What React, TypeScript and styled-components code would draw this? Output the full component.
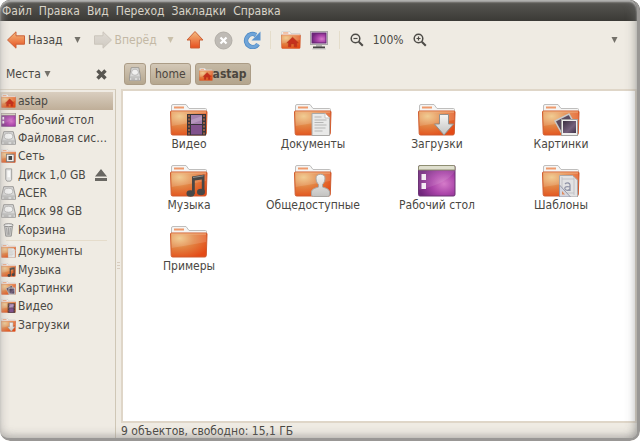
import React from "react";
import styled, { createGlobalStyle } from "styled-components";

const GlobalStyle = createGlobalStyle`
  * { box-sizing: border-box; }
  html, body { margin: 0; background: #fff; }
  body, button { font: 12px/14px "DejaVu Sans Condensed", "DejaVu Sans", sans-serif; color: #4a4843; }
  button { border: 0; padding: 0; background: none; display: flex; align-items: center; }
  ul { list-style: none; margin: 0; padding: 0; }
  svg { display: block; flex: none; }
`;

const Window = styled.div`
  position: relative;
  min-height: 100vh;
  display: flex;
  flex-direction: column;
  overflow: hidden;
  background: #efebe3;
  border-radius: 10px;
`;

const EdgeShade = styled.div`
  position: absolute;
  inset: 0;
  pointer-events: none;
  border-radius: 10px;
  border-right: 3px solid #999795;
  border-bottom: 3px solid #999795;
  box-shadow: inset 0 2px 2px #b5b5b3, inset 5px 0 8px -3px #b5b3b199, inset -8px 0 10px -6px #77777788, inset 0 -9px 10px -7px #77777777;
`;

const MenuBar = styled.nav`
  height: 21px;
  padding: 0 2px;
  display: flex;
  gap: 7px;
  align-items: center;
  background: linear-gradient(#5a5955, #3b3a36);
  button { color: #d9d4c8; }
`;

const Toolbar = styled.div`
  height: 38px;
  padding: 0 18px 0 6px;
  display: flex;
  align-items: center;
`;

const ToolButton = styled.button<{ $gap?: number }>`
  margin-right: ${(p) => p.$gap ?? 0}px;
  gap: 2px;
  &:disabled { color: #c3b8a5; }
`;

const Separator = styled.span`
  width: 1px;
  height: 18px;
  background: #e4ddcb;
  margin-right: 10px;
`;

const Zoom = styled.span`
  margin: 0 9px;
`;

const Spacer = styled.span`
  flex: 1;
`;

const LocationRow = styled.div`
  height: 30px;
  display: flex;
  align-items: center;
`;

const PlacesHeader = styled.div`
  width: 124px;
  padding: 0 17px 0 6px;
  display: flex;
  justify-content: space-between;
  button { gap: 3px; }
`;

const Crumbs = styled.div`
  display: flex;
  gap: 4px;
`;

const Crumb = styled.button<{ $current?: boolean }>`
  height: 22px;
  padding: 0 ${(p) => (p.$current ? 3 : 4)}px;
  border: 1px solid #ab9c86;
  border-radius: 3px;
  background: ${(p) => (p.$current ? "linear-gradient(#c4b8a4, #b4a58d)" : "linear-gradient(#d3c8b7, #b5a78f)")};
  color: #4c463e;
  font-weight: ${(p) => (p.$current ? 700 : 400)};
`;

const Body = styled.div`
  flex: 1;
  display: grid;
  grid-template-columns: 116px 5px minmax(0, 1fr);
`;

const Sidebar = styled.aside`
  border-top: 1px solid #d9d0c0;
  border-right: 1px solid #cfc7b6;
  padding: 2px 2px 0 0;
`;

const PlaceList = styled.ul<{ $height: number }>`
  height: ${(p) => p.$height}px;
  display: grid;
  grid-template-columns: minmax(0, 1fr);
  grid-auto-rows: 1fr;
  li { display: flex; }
`;

const Rule = styled.hr`
  height: 1px;
  margin: 1px 6px;
  border: 0;
  background: #e5dccb;
`;

const Place = styled.button<{ $selected?: boolean }>`
  width: 100%;
  padding: 0 6px 0 1px;
  gap: 2px;
  white-space: nowrap;
  background: ${(p) => (p.$selected ? "linear-gradient(#d9cebf, #bfae98)" : "none")};
  svg:last-child:not(:first-child) { margin-left: auto; }
`;

const Grip = styled.div`
  display: flex;
  align-items: center;
  justify-content: center;
`;

const Main = styled.main`
  display: flex;
  flex-direction: column;
  padding-right: 3px;
`;

const Files = styled.div`
  flex: 1;
  padding: 13px 4px;
  display: grid;
  grid-template-columns: repeat(auto-fill, 124px);
  grid-auto-rows: 61px;
  align-content: start;
  background: #fff;
  border: 2px solid #dfd6c8;
`;

const File = styled.button`
  flex-direction: column;
  gap: 1px;
`;

const Status = styled.footer`
  height: 17px;
  margin-bottom: 1px;
  line-height: 16px;
`;

type Kind =
  | "plain" | "video" | "docs" | "down" | "pics" | "music" | "public" | "templates"
  | "home" | "network" | "desktop" | "drive" | "usb" | "trash";

const Emblem = ({ kind }: { kind: Kind }) => {
  switch (kind) {
    case "video":
      return (
        <g>
          <rect x="17" y="10" width="19" height="21.500" fill="#38343a" />
          <rect x="21" y="11" width="11" height="9" fill="#a480ad" />
          <rect x="21" y="21" width="11" height="9.500" fill="#81528d" />
          <path d="M19 11v20M34 11v20" stroke="#b76b45" strokeWidth="1.500" strokeDasharray="2 1.500" />
          <path d="m21 16 11-4v4l-11 4z" fill="#c3a6c9" opacity=".6" />
        </g>
      );
    case "docs":
      return (
        <g>
          <path d="M18 9.500h13l4.500 4.500v17.500H18z" fill="#e9e9e8" stroke="#aaa9a7" />
          <path d="M31 9.500V14h4.500" fill="#fff" stroke="#c5c5c3" />
          <path d="M20.500 13h7M20.500 16h12M20.500 18.500h9M20.500 21h12M20.500 24h11M20.500 27h8" stroke="#b5b5b4" />
        </g>
      );
    case "down":
      return <path d="M21.500 10.500h9v9.500h5L26 31l-9.500-11h5z" fill="url(#silver)" stroke="#92908d" />;
    case "pics":
      return (
        <g>
          <path d="m13 17 14-7 6 11-14 7z" fill="#5b4c60" stroke="#c9c8c6" strokeWidth="1.500" />
          <rect x="19.500" y="15.500" width="16" height="16" fill="#eeeeec" stroke="#a4a3a1" />
          <rect x="21" y="17" width="13" height="12" fill="url(#photo)" />
        </g>
      );
    case "music":
      return (
        <g fill="#484746">
          <path d="M22 11.500 34.500 9.500V27h-2.700V14.500l-7 1V29H22z" />
          <ellipse cx="20.500" cy="28.500" rx="4" ry="3.300" />
          <ellipse cx="31" cy="27" rx="4" ry="3.300" />
          <path d="m23 12.500 10.500-1.700" stroke="#91908d" />
        </g>
      );
    case "public":
      return (
        <path d="M22 13c0-5 9-5 9 0 0 3-1 5-2.500 6.500V22c3 1 7 2 7 5v3q0 1.500-2 1.500h-14q-2 0-2-1.500v-3c0-3 4-4 7-5v-2.500C23 18 22 16 22 13z" fill="url(#silver)" stroke="#a9a7a4" />
      );
    case "templates":
      return (
        <g>
          <path d="M17.500 10.500h13l5 4.500v17h-18z" fill="#e2e2e3" stroke="#aaa9ab" />
          <path d="M20 14h12M20 28h12M20 12v18M32 12v18" stroke="#bbbbc0" strokeWidth=".8" />
          <path d="M23 19c2-2 5-1 5 1v6m0-4c-3-1-6 0-5 2s4 2 5-.5" fill="none" stroke="#9295a8" strokeWidth="1.300" />
          <path d="M17.500 20v12h11z" fill="#d4d6df" stroke="#9698a8" />
          <path d="M20 26v3.500h3z" fill="#e08a5c" />
        </g>
      );
    case "home":
      return <path d="M11 21 22 11l11 10h-3v7h-5v-5h-6v5h-5v-7z" fill="#c5301c" stroke="#b63a1c" />;
    case "network":
      return (
        <g>
          <rect x="14" y="12" width="19" height="17" fill="#f0efed" stroke="#777" strokeWidth="2" />
          <rect x="19" y="16" width="9" height="9" fill="#444" />
        </g>
      );
    default:
      return null;
  }
};

const Folder = ({ kind }: { kind: Kind }) => (
  <g>
    <path d="M1.500 11V2q0-1.500 1.500-1.500h13l3 4h16.500q1 0 1 1V11z" fill="#f5f5f4" stroke="#bfbebd" />
    <path d="M4 3.500h10" stroke="#ee9a6c" strokeWidth="2" />
    <path d="M.5 8q0-1 1-1h34.500q1 0 1 1l-.7 21.500q0 1.500-1.500 1.500H2.700q-1.500 0-1.500-1.500z" fill="url(#orange)" stroke="#cf5c30" />
    <path d="M1.500 8H36v8Q20 19 1.700 22z" fill="#fff" opacity=".14" />
    <path d="M1.500 8h34.500" stroke="#f0b080" />
    <Emblem kind={kind} />
  </g>
);

const Icon = ({ kind, w = 38, h = 32 }: { kind: Kind; w?: number; h?: number }) => (
  <svg width={w} height={h} viewBox="0 0 38 32" preserveAspectRatio="none" aria-hidden="true">
    <defs>
      <radialGradient id="orange" cx=".25" cy=".22" r=".9">
        <stop offset="0" stopColor="#efc482" />
        <stop offset=".45" stopColor="#e28443" />
        <stop offset="1" stopColor="#e44a16" />
      </radialGradient>
      <linearGradient id="silver" x2="0" y2="1">
        <stop offset="0" stopColor="#f5f5f4" />
        <stop offset="1" stopColor="#c3c2c0" />
      </linearGradient>
      <linearGradient id="photo" x2="1" y2="1">
        <stop offset="0" stopColor="#3b3040" />
        <stop offset=".6" stopColor="#75617c" />
        <stop offset="1" stopColor="#40354a" />
      </linearGradient>
      <radialGradient id="violet" cx=".7" cy=".6" r=".7">
        <stop offset="0" stopColor="#d57bc9" />
        <stop offset=".5" stopColor="#a943a8" />
        <stop offset="1" stopColor="#71267c" />
      </radialGradient>
    </defs>
    {kind === "desktop" ? (
      <g>
        <rect x=".5" y=".5" width="36.500" height="30.500" rx="1.500" fill="url(#violet)" stroke="#6c3474" />
        <path d="M.5 5V2Q.5.500 2 .5h33.500Q37 .5 37 2v3z" fill="#dfdfce" stroke="#8e8e72" />
        <path d="M1 6h36Q30 18 1 25z" fill="#fff" opacity=".1" />
        <rect x="3.500" y="9" width="4.500" height="6" fill="#f4edf4" />
        <rect x="3.500" y="18" width="4.500" height="6" fill="#f4edf4" />
      </g>
    ) : kind === "drive" ? (
      <g>
        <path d="M7 1.500h24l5.500 21v7q0 2-2 2H3.500q-2 0-2-2v-7z" fill="#d9d9d8" stroke="#8d8c8a" strokeWidth="2" />
        <ellipse cx="19" cy="12" rx="11" ry="7" fill="#f0f0ef" stroke="#adacab" strokeWidth="2" />
        <path d="M3 23h32" stroke="#a4a3a2" strokeWidth="2" />
        <path d="M7 27.500h12M26 27.500h6" stroke="#8f8e8c" strokeWidth="2" />
      </g>
    ) : kind === "usb" ? (
      <g>
        <path d="M12 2h15v24l-3 4h-9l-3-4z" fill="#e6e6e5" stroke="#92918f" strokeWidth="2" />
        <path d="M16 6h7v15h-7z" fill="#fbfbfa" />
      </g>
    ) : kind === "trash" ? (
      <g>
        <path d="M9 7h20l-3 23H12z" fill="#cfcfce" stroke="#888785" strokeWidth="2" />
        <path d="M14 11l2 16M19 11v16M24 11l-2 16" stroke="#9a9997" strokeWidth="2" />
        <ellipse cx="19" cy="5" rx="12" ry="3.500" fill="#f0f0ef" stroke="#7b7a78" strokeWidth="2" />
      </g>
    ) : (
      <Folder kind={kind} />
    )}
  </svg>
);

const Arrow = ({ dir, off }: { dir: "left" | "right" | "up"; off?: boolean }) => (
  <svg width="20" height="20" viewBox="0 0 20 20" aria-hidden="true">
    <defs>
      <linearGradient id={`arrow-${dir}`} x2="0" y2="1">
        <stop offset="0" stopColor={off ? "#cfcac2" : "#f4bd80"} />
        <stop offset="1" stopColor={off ? "#e0dbd4" : "#e64e1e"} />
      </linearGradient>
    </defs>
    <path
      d={dir === "up" ? "M10 1.500 18 10h-3.500v8h-9v-8H2z" : "M1.500 10 10 1.800v4h8.500v8.400H10v4z"}
      transform={dir === "right" ? "rotate(180 10 10)" : undefined}
      fill={`url(#arrow-${dir})`}
      stroke={off ? "#cbc5bc" : "#cc6239"}
    />
  </svg>
);

const Caret = ({ color = "#74716a" }: { color?: string }) => (
  <svg width="7" height="8" viewBox="0 0 7 8" aria-hidden="true">
    <path d="M.5 1h6L3.500 7z" fill={color} />
  </svg>
);

const Magnifier = ({ plus }: { plus?: boolean }) => (
  <svg width="14" height="14" viewBox="0 0 14 14" fill="none" stroke="#4d4b47" aria-hidden="true">
    <circle cx="5.500" cy="5.500" r="4.300" strokeWidth="1.500" />
    <path d="M8.800 8.800 12.800 12.800" strokeWidth="2" />
    <path d={plus ? "M3.500 5.500h4M5.500 3.500v4" : "M3.500 5.500h4"} strokeWidth="1.200" />
  </svg>
);

const menus = ["Файл", "Правка", "Вид", "Переход", "Закладки", "Справка"];
const devices: [string, Kind][] = [
  ["astap", "home"], ["Рабочий стол", "desktop"], ["Файловая сис…", "drive"], ["Сеть", "network"],
  ["Диск 1,0 GB", "usb"], ["ACER", "drive"], ["Диск 98 GB", "drive"], ["Корзина", "trash"],
];
const bookmarks: [string, Kind][] = [
  ["Документы", "docs"], ["Музыка", "music"], ["Картинки", "pics"], ["Видео", "video"], ["Загрузки", "down"],
];
const files: [string, Kind][] = [
  ["Видео", "video"], ["Документы", "docs"], ["Загрузки", "down"], ["Картинки", "pics"],
  ["Музыка", "music"], ["Общедоступные", "public"], ["Рабочий стол", "desktop"], ["Шаблоны", "templates"],
  ["Примеры", "plain"],
];

const Places = ({ items, height }: { items: [string, Kind][]; height: number }) => (
  <PlaceList $height={height}>
    {items.map(([name, kind]) => (
      <li key={name}>
        <Place $selected={kind === "home"}>
          <Icon kind={kind} w={15} h={14} />
          {name}
          {kind === "usb" && (
            <svg width="12" height="12" viewBox="0 0 12 12" fill="#696762" aria-label="Извлечь">
              <path d="M6 0 12 7.500H0zM0 9h12v3H0z" />
            </svg>
          )}
        </Place>
      </li>
    ))}
  </PlaceList>
);

export default function App() {
  return (
    <Window>
      <GlobalStyle />
      <MenuBar>{menus.map((m) => <button key={m}>{m}</button>)}</MenuBar>
      <Toolbar>
        <ToolButton $gap={11}><Arrow dir="left" />Назад</ToolButton>
        <ToolButton $gap={12} aria-label="История назад"><Caret /></ToolButton>
        <ToolButton $gap={10} disabled><Arrow dir="right" off />Вперёд</ToolButton>
        <ToolButton $gap={11} disabled aria-label="История вперёд"><Caret color="#c9c0aa" /></ToolButton>
        <ToolButton $gap={9} aria-label="Вверх">
          <Arrow dir="up" />
        </ToolButton>
        <ToolButton $gap={10} disabled aria-label="Остановить">
          <svg width="19" height="19" viewBox="0 0 19 19">
            <circle cx="9.500" cy="9.500" r="8.500" fill="#bfbbb5" stroke="#b1ada6" />
            <path d="m6.500 6.500 6 6m0-6-6 6" stroke="#fff" strokeWidth="2.200" />
          </svg>
        </ToolButton>
        <ToolButton $gap={9} aria-label="Обновить">
          <svg width="18" height="18" viewBox="0 0 18 18">
            <path d="M15 13.200A6.500 6.500 0 1 1 13 4" fill="none" stroke="#4c88c3" strokeWidth="4.500" />
            <path d="M15 13.200A6.500 6.500 0 1 1 13 4" fill="none" stroke="#6fa4d8" strokeWidth="3" />
            <path d="M17.500.5v9h-9z" fill="#5d95cf" />
          </svg>
        </ToolButton>
        <Separator />
        <ToolButton $gap={9} aria-label="Домашняя папка"><Icon kind="home" w={20} h={18} /></ToolButton>
        <ToolButton $gap={11} aria-label="Компьютер">
          <svg width="18" height="19" viewBox="0 0 18 19">
            <rect x=".5" y=".5" width="17" height="13" fill="#e4e4e2" stroke="#a7a6a4" />
            <rect x="2" y="2" width="14" height="10" fill="url(#violet)" stroke="#672674" />
            <path d="M6 14h6v2H6z" fill="#b5b4b2" />
            <path d="M3 15.500h12v2H3z" fill="#454443" />
            <path d="M2 18h14" stroke="#c8c7c5" />
          </svg>
        </ToolButton>
        <Separator />
        <ToolButton aria-label="Уменьшить"><Magnifier /></ToolButton>
        <Zoom>100%</Zoom>
        <ToolButton aria-label="Увеличить"><Magnifier plus /></ToolButton>
        <Spacer />
        <ToolButton $gap={4} aria-label="Ещё"><Caret /></ToolButton>
      </Toolbar>
      <LocationRow>
        <PlacesHeader>
          <button>Места<Caret /></button>
          <button aria-label="Закрыть">
            <svg width="11" height="11" viewBox="0 0 11 11">
              <path d="m1.500 1.500 8 8m0-8-8 8" stroke="#585651" strokeWidth="3.400" />
            </svg>
          </button>
        </PlacesHeader>
        <Crumbs>
          <Crumb aria-label="Файловая система"><Icon kind="drive" w={12} h={14} /></Crumb>
          <Crumb>home</Crumb>
          <Crumb $current><Icon kind="home" w={14} h={13} />astap</Crumb>
        </Crumbs>
      </LocationRow>
      <Body>
        <Sidebar>
          <Places items={devices} height={147} />
          <Rule />
          <Places items={bookmarks} height={92} />
        </Sidebar>
        <Grip>
          <svg width="3" height="7" viewBox="0 0 3 7"><path d="M0 .5h3M0 3.500h3M0 6.500h3" stroke="#d9cdbf" /></svg>
        </Grip>
        <Main>
          <Files>
            {files.map(([name, kind]) => (
              <File key={name}><Icon kind={kind} />{name}</File>
            ))}
          </Files>
          <Status>9 объектов, свободно: 15,1 ГБ</Status>
        </Main>
      </Body>
      <EdgeShade />
    </Window>
  );
}
